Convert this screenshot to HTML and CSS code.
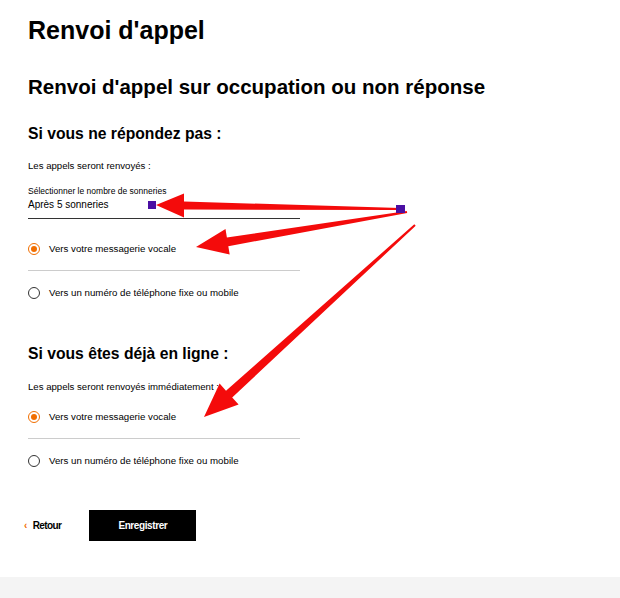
FILE: index.html
```html
<!DOCTYPE html>
<html lang="fr">
<head>
<meta charset="UTF-8">
<meta name="viewport" content="width=device-width, initial-scale=1.0">
<title>Renvoi d'appel</title>
<link rel="stylesheet" href="styles.css">
</head>
<body>

<div id="page">
    <h1 class="title">Renvoi d'appel</h1>
    <h2 class="subtitle">Renvoi d'appel sur occupation ou non réponse</h2>

    <div class="block">
        <h3 class="block-title">Si vous ne répondez pas :</h3>
        <p class="hint">Les appels seront renvoyés :</p>
        <div class="select">
            <div class="select-label">Sélectionner le nombre de sonneries</div>
            <div class="select-value">Après 5 sonneries</div>
        </div>
        <ul class="options">
            <li class="option checked"><span class="radio"></span>Vers votre messagerie vocale</li>
            <li class="option"><span class="radio"></span>Vers un numéro de téléphone fixe ou mobile</li>
        </ul>
    </div>

    <div class="block second">
        <h3 class="block-title">Si vous êtes déjà en ligne :</h3>
        <p class="hint">Les appels seront renvoyés immédiatement :</p>
        <ul class="options">
            <li class="option checked"><span class="radio"></span>Vers votre messagerie vocale</li>
            <li class="option"><span class="radio"></span>Vers un numéro de téléphone fixe ou mobile</li>
        </ul>
    </div>

    <div class="actions">
        <a class="back" href="#"><span class="chevron">&lsaquo;</span>Retour</a>
        <button class="save" type="button">Enregistrer</button>
    </div>
</div>

<div id="footer"></div>

<!-- annotations ajoutées sur la capture -->
<svg class="marks" width="620" height="598" viewBox="0 0 620 598">
    <polygon fill="#f40b0b" points="400,208 184,201.5 184,193.5 156,205 184,217.5 184,209.5 400,210"/>
    <polygon fill="#f40b0b" points="406.8,211 226.9,237.4 225.5,229 196,247 229.7,254.6 228.3,246.2 407.2,213"/>
    <polygon fill="#f40b0b" points="414.3,224.3 226,390.7 219.6,383.6 204,417 238.6,404.6 232.2,397.5 415.7,225.7"/>
    <rect x="148" y="201" width="8" height="8" fill="#4a0fa3"/>
    <rect x="396" y="205" width="9" height="8" fill="#4a0fa3"/>
</svg>

</body>
</html>
```

FILE: styles.css
```css
body {
    font-family: "Liberation Sans", Arial, sans-serif;
    background: #fff;
    color: #000;
    margin: 0;
    padding: 0;
}
#page {
    padding: 0 28px;
    height: 577px;
    box-sizing: border-box;
}
.title {
    font-size: 25px;
    line-height: 28px;
    font-weight: bold;
    margin: 0;
    padding-top: 16px;
}
.subtitle {
    font-size: 20.5px;
    line-height: 24px;
    font-weight: bold;
    margin: 0;
    padding-top: 31px;
}
.block-title {
    font-size: 15.7px;
    line-height: 20px;
    font-weight: bold;
    margin: 0;
    padding-top: 25px;
}
.hint {
    font-size: 9.6px;
    line-height: 13px;
    margin: 0;
    padding-top: 15px;
}
.select {
    width: 272px;
    border-bottom: 1px solid #333;
    padding-top: 14px;
    padding-bottom: 6px;
}
.select-label {
    font-size: 8.5px;
    line-height: 10px;
}
.select-value {
    font-size: 10px;
    line-height: 14px;
    margin-top: 2px;
}
.options {
    list-style-type: none;
    margin: 0;
    padding: 0;
    width: 272px;
}
.option {
    display: flex;
    align-items: center;
    height: 43px;
    font-size: 9.7px;
    border-bottom: 1px solid #ccc;
}
.option:last-child {
    border-bottom: none;
}
.select + .options {
    margin-top: 8px;
}
.radio {
    width: 10px;
    height: 10px;
    border: 1px solid #333;
    border-radius: 50%;
    margin-right: 9px;
    display: flex;
    justify-content: center;
    align-items: center;
}
.checked .radio {
    border-color: #f16e00;
}
.checked .radio::after {
    content: "";
    width: 6px;
    height: 6px;
    border-radius: 50%;
    background-color: #f16e00;
}
.second .block-title {
    padding-top: 30px;
}
.second .hint {
    padding-top: 16px;
}
.second .options {
    margin-top: 2px;
}
.actions {
    display: flex;
    align-items: center;
    margin-top: 28px;
}
.back {
    color: #000;
    font-size: 10px;
    font-weight: bold;
    letter-spacing: -0.6px;
    text-decoration: none;
    margin-left: -4px;
    margin-right: 28px;
}
.chevron {
    color: #f16e00;
    margin-right: 6px;
}
.save {
    width: 107px;
    height: 31px;
    border: none;
    background-color: #000;
    color: #fff;
    font-family: inherit;
    font-size: 10px;
    font-weight: bold;
    letter-spacing: -0.4px;
}
#footer {
    height: 21px;
    background-color: #f4f4f4;
}
.marks {
    position: absolute;
    left: 0;
    top: 0;
    pointer-events: none;
}
```
